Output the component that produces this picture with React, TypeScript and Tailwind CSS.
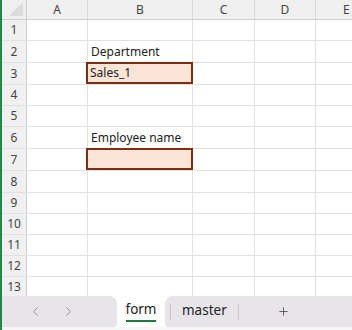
import { ChevronLeft, ChevronRight, Plus } from "lucide-react";

// column widths (row header first)
const cols = [
    { name: "A", w: "w-[61px]" },
    { name: "B", w: "w-[105px]" },
    { name: "C", w: "w-[62px]" },
    { name: "D", w: "w-[61px]" },
];

// row heights measured off the sheet
const rows = [
    { n: 1, h: "h-[21px]" },
    { n: 2, h: "h-[22px]", label: "Department" },
    { n: 3, h: "h-[22px]", input: "Sales_1" },
    { n: 4, h: "h-[21px]" },
    { n: 5, h: "h-[21px]" },
    { n: 6, h: "h-[22px]", label: "Employee name" },
    { n: 7, h: "h-[22px]", input: "" },
    { n: 8, h: "h-[22px]" },
    { n: 9, h: "h-[21px]" },
    { n: 10, h: "h-[21px]" },
    { n: 11, h: "h-[21px]" },
    { n: 12, h: "h-[21px]" },
    { n: 13, h: "h-[21px]" },
];

export default function App() {
    return (
        <div className="flex flex-col w-[352px] h-[330px] bg-white border-l-2 border-[#1f8a46] overflow-hidden font-['Noto_Sans',sans-serif] text-[#222]">
            {/* SHEET */}
            <div className="flex-1 overflow-hidden">
                {/* column headers */}
                <div className="flex h-[20px] bg-[#f0f0f0] border-b border-[#cfcfcf]">
                    <div className="relative w-[25px] shrink-0 border-r border-[#cfcfcf]">
                        <div className="absolute right-[3px] bottom-[3px] w-0 h-0 border-l-[14px] border-l-transparent border-b-[14px] border-b-[#dcdcdc]" />
                    </div>
                    {cols.map((c) => (
                        <div
                            key={c.name}
                            className={`${c.w} shrink-0 border-r border-[#dadada] flex items-center justify-center text-[12px] text-[#444]`}
                        >
                            {c.name}
                        </div>
                    ))}
                    <div className="flex-1 flex items-center pl-[27px] text-[12px] text-[#444]">E</div>
                </div>

                {rows.map((r) => (
                    <div key={r.n} className={`flex ${r.h} border-b border-[#e1e1e1]`}>
                        <div className="w-[25px] shrink-0 bg-[#f0f0f0] border-r border-[#cfcfcf] flex items-center justify-center text-[12px] text-[#444]">
                            {r.n}
                        </div>
                        <div className="w-[61px] shrink-0 border-r border-[#e1e1e1]" />
                        <div className="relative w-[105px] shrink-0 border-r border-[#e1e1e1] flex items-center pl-[3px] text-[12px] whitespace-nowrap">
                            {r.label}
                            {r.input !== undefined && (
                                <div className="absolute -left-[2px] -top-[1px] right-[-1px] bottom-0 bg-[#fce4d6] border-2 border-[#7f2f10] flex items-center pl-[2px] text-[12px]">
                                    {r.input}
                                </div>
                            )}
                        </div>
                        <div className="w-[62px] shrink-0 border-r border-[#e1e1e1]" />
                        <div className="w-[61px] shrink-0 border-r border-[#e1e1e1]" />
                        <div className="flex-1" />
                    </div>
                ))}
            </div>

            {/* SHEET TABS */}
            <div className="flex h-[31px] shrink-0">
                <div className="w-[115px] bg-[#e7e5ea] rounded-tr-lg rounded-br-sm flex items-center pl-[26px] gap-[18px] text-[#8c8c8c]">
                    <ChevronLeft size={15} strokeWidth={1.5} />
                    <ChevronRight size={15} strokeWidth={1.5} />
                </div>
                <div className="w-[48px] bg-white flex flex-col items-center pt-[3px]">
                    <span className="text-[13.5px] leading-[20px] text-[#222]">form</span>
                    <span className="w-[30px] h-[2px] bg-[#1e7b3e] mt-[1px]" />
                </div>
                <div className="flex-1 bg-[#e7e5ea] rounded-tl-lg rounded-bl-sm flex items-center">
                    <span className="w-px h-[16px] bg-[#c9c7cc] ml-[5px]" />
                    <span className="text-[13.5px] text-[#222] ml-[11px] mb-[2px]">master</span>
                    <span className="w-px h-[16px] bg-[#c9c7cc] ml-[11px]" />
                    <Plus size={13} strokeWidth={1.3} className="text-[#333] ml-[38px]" />
                </div>
            </div>
            <div className="h-[3px] shrink-0 bg-[#f7f7f7]" />
        </div>
    );
}
